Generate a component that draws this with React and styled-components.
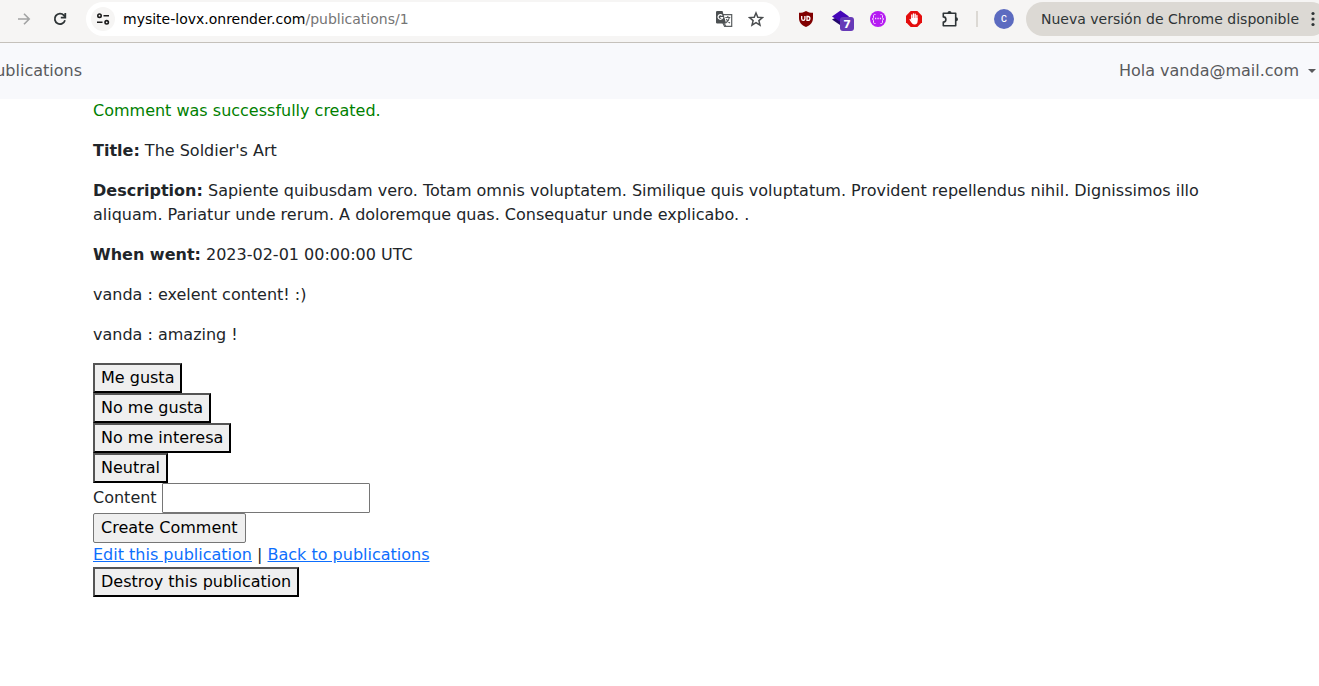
import React from 'react';
import styled, { createGlobalStyle } from 'styled-components';

const GlobalStyle = createGlobalStyle`
  *, *::before, *::after { box-sizing: border-box; }
  body {
    margin: 0;
    background: #fff;
    color: #212529;
    font-family: "DejaVu Sans", sans-serif;
    font-size: 16px;
    line-height: 24px;
  }
`;

const Toolbar = styled.header`
  display: flex;
  align-items: center;
  height: 43px;
  padding: 0 0 5px 6px;
  background: #f6f5f4;
  border-bottom: 1px solid #c5c1bb;
  overflow: hidden;
  font-size: 14px;
  line-height: 20px;
`;

const IconButton = styled.button`
  display: flex;
  flex: none;
  align-items: center;
  justify-content: center;
  width: 36px;
  height: 34px;
  padding: 0;
  border: 0;
  background: none;
  color: ${(p) => p.$color || '#2e3436'};

  svg { display: block; }
`;

const AddressBar = styled.div`
  display: flex;
  flex: 1;
  align-items: center;
  min-width: 0;
  height: 34px;
  margin: 0 8px;
  padding: 0 8px 0 5px;
  border-radius: 17px;
  background: #fff;
`;

const SiteInfo = styled.button`
  display: flex;
  flex: none;
  align-items: center;
  justify-content: center;
  width: 24px;
  height: 24px;
  padding: 0;
  border: 0;
  border-radius: 50%;
  background: #f6f5f4;
  color: #1b1b1b;
`;

const Url = styled.div`
  flex: 1;
  min-width: 0;
  margin-left: 8px;
  overflow: hidden;
  white-space: nowrap;
  color: #000;

  span { color: #757575; }
`;

const AddressActions = styled.div`
  display: flex;

  button { width: 32px; }
`;

const Divider = styled.span`
  flex: none;
  width: 2px;
  height: 16px;
  margin: 0 16px 0 8px;
  background: #dcd9d4;
`;

const Avatar = styled.button`
  flex: none;
  width: 20px;
  height: 20px;
  margin-right: 12px;
  padding: 0;
  border: 0;
  border-radius: 50%;
  background: #5c6bc0;
  color: #fff;
  font-family: Roboto, sans-serif;
  font-size: 9px;
  font-weight: 500;
  line-height: 20px;
`;

const UpdateButton = styled.button`
  display: flex;
  flex: none;
  align-items: center;
  gap: 12px;
  height: 34px;
  margin-right: -9px;
  padding: 0 13px 0 15px;
  border: 0;
  border-radius: 17px;
  background: #dcd9d4;
  color: #2e3436;
  font: inherit;
  white-space: nowrap;
`;

const Navbar = styled.nav`
  display: flex;
  align-items: center;
  justify-content: space-between;
  height: 56px;
  padding-right: 3px;
  background: #f8f9fc;
`;

const NavStart = styled.div`
  display: flex;
  justify-content: flex-end;
  width: 82px;
  overflow: hidden;
`;

const NavLink = styled.a`
  display: flex;
  align-items: center;
  gap: 9px;
  color: #595a5c;
  text-decoration: none;
`;

const Caret = styled.span`
  border-top: 4px solid currentColor;
  border-right: 4px solid transparent;
  border-left: 4px solid transparent;
`;

const Main = styled.main`
  padding: 0 93px 24px;
`;

const Paragraph = styled.p`
  margin: 0 0 16px;
  color: ${(p) => (p.$notice ? '#008000' : 'inherit')};
`;

const FormRow = styled.form`
  display: flex;
  flex-direction: column;
  align-items: flex-start;
`;

const ActionButton = styled.button`
  padding: 1px 6px;
  border: 2px solid;
  border-color: #555 #000 #000 #555;
  border-radius: 0;
  background: #efefef;
  color: #000;
  font: inherit;
`;

const SubmitButton = styled(ActionButton)`
  padding: 2px 7px;
  border: 1px solid #767676;
  border-radius: 2px;
`;

const Field = styled.div`
  display: flex;
  align-items: center;
  gap: 5px;
`;

const TextInput = styled.input`
  width: 208px;
  height: 30px;
  padding: 2px 3px;
  border: 1px solid #767676;
  border-radius: 1px;
  background: #fff;
  font: inherit;
`;

const Link = styled.a`
  color: #0d6efd;
  text-decoration: underline;
`;

const ForwardIcon = () => (
  <svg width="16" height="16" viewBox="0 0 16 16" fill="none" stroke="currentColor" strokeWidth="1.6">
    <path d="M2 8h11M8 2.8 13.2 8 8 13.2" />
  </svg>
);

const ReloadIcon = () => (
  <svg width="16" height="16" viewBox="0 0 16 16" fill="none" stroke="currentColor" strokeWidth="1.8">
    <path d="M13 9.3A5.2 5.2 0 1 1 11.9 4.4L13.2 5.8M13.3 2v4.6H8.8" />
  </svg>
);

const TuneIcon = () => (
  <svg width="14" height="14" viewBox="0 0 14 14" fill="none" stroke="currentColor" strokeWidth="1.6">
    <circle cx="3.5" cy="3.7" r="1.7" />
    <path d="M7.5 3.7H13M1 10.3h5.5" />
    <circle cx="10.7" cy="10.3" r="1.7" />
  </svg>
);

const TranslateIcon = () => (
  <svg width="18" height="18" viewBox="0 0 18 18" fill="none">
    <path d="M7 4.7h9.7v11.6H9.6L7.9 13" stroke="#5a5e60" strokeWidth="1.2" />
    <path d="M1.800 1h5.700l3.700 12.500H1.800L1 12.700V1.800Z" fill="#4c5052" />
    <path d="M7.200 5.600A2.300 2.300 0 1 0 7.600 7.500H5.300" stroke="#fff" strokeWidth="1.200" />
    <path d="M10.300 7.500h5M12.800 6v1.500M14.400 7.500c-.4 2.100-1.700 4-3.400 5.200M11.300 9c.8 1.700 2 3 3.700 4M8.800 13l2 3" stroke="#5a5e60" strokeWidth="1.200" />
  </svg>
);

const StarIcon = () => (
  <svg width="16" height="16" viewBox="0 0 16 16" fill="none" stroke="currentColor" strokeWidth="1.5">
    <path d="m8 2 1.800 4.200 4.700.4-3.600 3 1.100 4.500L8 11.700l-4 2.400 1.100-4.500-3.600-3 4.700-.4Z" />
  </svg>
);

const ShieldIcon = () => (
  <svg width="16" height="16" viewBox="0 0 16 16">
    <path d="M8 0c2 1.300 4.300 1.800 7 1.800V7c0 4.500-2.500 7-7 9-4.500-2-7-4.500-7-9V1.800C3.700 1.800 6 1.300 8 0Z" fill="#800000" />
    <path d="M3.700 5v2.700a1.600 1.600 0 0 0 3.200 0V5M9 5.500v3.800h1a1.900 1.900 0 0 0 0-3.800Z" fill="none" stroke="#fff" strokeWidth="1.300" />
  </svg>
);

const LayersIcon = () => (
  <svg width="24" height="24" viewBox="0 0 24 24">
    <path d="m2 12.500 8 5.500 7-5.500-7-4Z" fill="#22086b" />
    <path d="m2 9.500 8.500-6 8.500 6-8.500 5.500Z" fill="#4506b8" />
    <rect x="10" y="10" width="14" height="14" rx="3" fill="#673ab7" />
    <text x="17" y="21" textAnchor="middle" fill="#fff" fontFamily="DejaVu Sans, sans-serif" fontSize="11" fontWeight="700">7</text>
  </svg>
);

const BracesIcon = () => (
  <svg width="16" height="16" viewBox="0 0 16 16" fill="none" stroke="#f7d7ff">
    <circle cx="8" cy="8" r="8" fill="#b51cf2" stroke="none" />
    <path d="M5.500 3.500H4.800c-1 0-1.300.5-1.300 1.400v1.700c0 .8-.5 1.400-1.500 1.400 1 0 1.500.6 1.500 1.400v1.700c0 .9.3 1.400 1.300 1.400h.7M10.500 3.500h.7c1 0 1.300.5 1.300 1.400v1.700c0 .8.5 1.400 1.500 1.400-1 0-1.500.6-1.500 1.400v1.700c0 .9-.3 1.400-1.300 1.400h-.7" />
    <path d="M5 7.500h1.300M7.400 7.500h1.300M9.800 7.500h1.300" strokeWidth="1.600" />
  </svg>
);

const HandIcon = () => (
  <svg width="16" height="16" viewBox="0 0 16 16">
    <path d="M4.700 0h6.600L16 4.700v6.600L11.300 16H4.700L0 11.300V4.700Z" fill="#e40d0d" />
    <path d="M5.800 8.500V4M7.500 8V2.800M9.200 8V3.200M10.900 9V4.500" stroke="#fff" strokeWidth="1.300" strokeLinecap="round" />
    <path d="M5.200 7h6.400v3c0 2.200-1 3.500-3 3.500-2 0-2.800-1-3.400-3Z" fill="#fff" />
    <path d="m5.700 10.800-1.600-2.300" stroke="#fff" strokeWidth="1.300" strokeLinecap="round" />
  </svg>
);

const PuzzleIcon = () => (
  <svg width="20" height="20" viewBox="0 0 20 20">
    <path d="M3.300 4.300h12.400v12.400H3.300v-3.600a2.500 2.500 0 0 0 0-5.200Z" fill="none" stroke="currentColor" strokeWidth="1.600" strokeLinejoin="round" />
    <path d="M7.500 4a2 2 0 0 1 4 0ZM16 8.300a2 2 0 0 1 0 4Z" fill="currentColor" />
  </svg>
);

const DotsIcon = () => (
  <svg width="4" height="16" viewBox="0 0 4 16" fill="currentColor">
    <circle cx="2" cy="2.500" r="1.600" />
    <circle cx="2" cy="8" r="1.600" />
    <circle cx="2" cy="13.500" r="1.600" />
  </svg>
);

const extensions = [
  { label: 'uBlock', Icon: ShieldIcon },
  { label: 'Layers, 7 notifications', Icon: LayersIcon },
  { label: 'Braces', Icon: BracesIcon },
  { label: 'Content blocker', Icon: HandIcon },
  { label: 'Extensions', Icon: PuzzleIcon },
];

const reactions = ['Me gusta', 'No me gusta', 'No me interesa', 'Neutral'];

const comments = [
  { author: 'vanda', text: 'exelent content! :)' },
  { author: 'vanda', text: 'amazing !' },
];

const keepOnPage = (event) => event.preventDefault();

function BrowserToolbar() {
  return (
    <Toolbar>
      <IconButton aria-label="Forward" $color="#a2a3a3"><ForwardIcon /></IconButton>
      <IconButton aria-label="Reload"><ReloadIcon /></IconButton>
      <AddressBar>
        <SiteInfo aria-label="Site information"><TuneIcon /></SiteInfo>
        <Url>mysite-lovx.onrender.com<span>/publications/1</span></Url>
        <AddressActions>
          <IconButton aria-label="Translate"><TranslateIcon /></IconButton>
          <IconButton aria-label="Bookmark" $color="#494c4e"><StarIcon /></IconButton>
        </AddressActions>
      </AddressBar>
      {extensions.map(({ label, Icon }) => (
        <IconButton key={label} aria-label={label}><Icon /></IconButton>
      ))}
      <Divider />
      <Avatar>C</Avatar>
      <UpdateButton>Nueva versión de Chrome disponible<DotsIcon /></UpdateButton>
    </Toolbar>
  );
}

export default function App() {
  return (
    <>
      <GlobalStyle />
      <BrowserToolbar />
      <Navbar>
        <NavStart><NavLink href="#publications">Publications</NavLink></NavStart>
        <NavLink href="#account">Hola vanda@mail.com<Caret /></NavLink>
      </Navbar>
      <Main>
        <Paragraph $notice>Comment was successfully created.</Paragraph>
        <Paragraph><strong>Title:</strong> The Soldier's Art</Paragraph>
        <Paragraph>
          <strong>Description:</strong> Sapiente quibusdam vero. Totam omnis voluptatem. Similique quis
          voluptatum. Provident repellendus nihil. Dignissimos illo aliquam. Pariatur unde rerum. A
          doloremque quas. Consequatur unde explicabo. .
        </Paragraph>
        <Paragraph><strong>When went:</strong> 2023-02-01 00:00:00 UTC</Paragraph>
        {comments.map(({ author, text }) => (
          <Paragraph key={text}>{author} : {text}</Paragraph>
        ))}
        {reactions.map((name) => (
          <FormRow key={name} onSubmit={keepOnPage}><ActionButton>{name}</ActionButton></FormRow>
        ))}
        <FormRow onSubmit={keepOnPage}>
          <Field>
            <label htmlFor="comment-content">Content</label>
            <TextInput id="comment-content" type="text" />
          </Field>
          <SubmitButton>Create Comment</SubmitButton>
        </FormRow>
        <div>
          <Link href="#edit">Edit this publication</Link> | <Link href="#publications">Back to publications</Link>
        </div>
        <FormRow onSubmit={keepOnPage}><ActionButton>Destroy this publication</ActionButton></FormRow>
      </Main>
    </>
  );
}
